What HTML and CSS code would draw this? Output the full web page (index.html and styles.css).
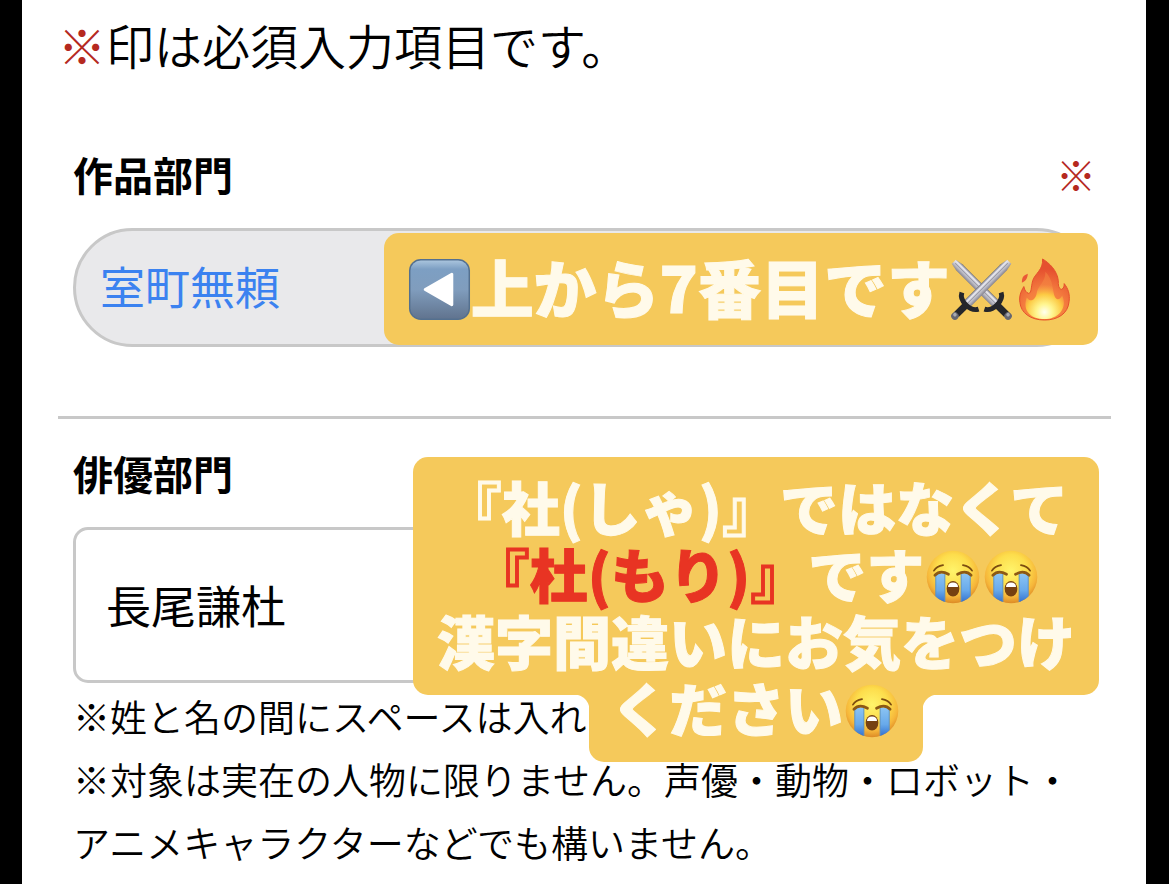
FILE: index.html
```html
<!DOCTYPE html>
<html lang="ja">
<head>
    <meta charset="UTF-8">
    <meta name="viewport" content="width=device-width, initial-scale=1.0">
    <title>投票フォーム</title>
    <link rel="stylesheet" href="styles.css">
</head>
<body>

<!-- 絵文字の定義 -->
<svg class="defs" width="0" height="0" aria-hidden="true">
    <defs>
        <linearGradient id="keyFill" x1="0" y1="0" x2="0" y2="1">
            <stop offset="0" stop-color="#a9c4dd"/>
            <stop offset="0.15" stop-color="#7d9fc3"/>
            <stop offset="0.5" stop-color="#809dbd"/>
            <stop offset="1" stop-color="#61748f"/>
        </linearGradient>
        <linearGradient id="blade" x1="0" y1="0" x2="1" y2="0">
            <stop offset="0" stop-color="#6f6f7a"/>
            <stop offset="0.25" stop-color="#e6e6ee"/>
            <stop offset="0.55" stop-color="#cdcdd6"/>
            <stop offset="1" stop-color="#85838f"/>
        </linearGradient>
        <radialGradient id="flame" gradientUnits="userSpaceOnUse" cx="32" cy="53" r="42">
            <stop offset="0" stop-color="#fb9a38"/>
            <stop offset="0.5" stop-color="#f47d3f"/>
            <stop offset="1" stop-color="#e5502f"/>
        </radialGradient>
        <radialGradient id="flameCore" gradientUnits="userSpaceOnUse" cx="32" cy="55" r="28">
            <stop offset="0" stop-color="#fffff0"/>
            <stop offset="0.3" stop-color="#fff58e"/>
            <stop offset="0.65" stop-color="#fcc943"/>
            <stop offset="1" stop-color="#f58b43" stop-opacity="0.5"/>
        </radialGradient>
        <radialGradient id="face" cx="0.5" cy="0.38" r="0.62">
            <stop offset="0" stop-color="#fff46b"/>
            <stop offset="0.5" stop-color="#fddd4c"/>
            <stop offset="0.8" stop-color="#f6b63a"/>
            <stop offset="1" stop-color="#dc8a25"/>
        </radialGradient>
        <linearGradient id="tear" x1="0" y1="0" x2="0" y2="1">
            <stop offset="0" stop-color="#8cc4f3"/>
            <stop offset="0.55" stop-color="#68aaeb"/>
            <stop offset="1" stop-color="#2b68ca"/>
        </linearGradient>
        <clipPath id="faceClip"><circle cx="32" cy="32" r="29"/></clipPath>

        <symbol id="sword" viewBox="0 0 64 64">
            <g transform="translate(5 59) rotate(45)">
                <path d="M-4.5 -16V-70L-3 -78H3L4.5 -70V-16Z" fill="url(#blade)"/>
                <path d="M0 -76V-16" stroke="#9999a5" stroke-width="1"/>
                <path d="M-3.5 -16H3.5V-2H-3.5Z" fill="#25262b"/>
                <path d="M-12 -22Q-9 -16 0 -16Q9 -16 12 -22" fill="none" stroke="#25262b" stroke-width="5"/>
                <circle r="3.8" fill="#666771"/>
                <circle cx="-1" cy="-1" r="1.8" fill="#a8a9b0"/>
            </g>
        </symbol>

        <symbol id="cry" viewBox="0 0 64 64">
            <circle cx="32" cy="32" r="29" fill="url(#face)"/>
            <g clip-path="url(#faceClip)">
                <rect x="13" y="28" width="10" height="34" fill="url(#tear)"/>
                <rect x="41" y="28" width="10" height="34" fill="url(#tear)"/>
                <path d="M13 28V62M23 28V62M41 28V62M51 28V62" stroke="#548fc9" stroke-width="1"/>
            </g>
            <path d="M12 30Q18 24 27 29M37 29Q46 24 52 30" fill="none" stroke="#8c5914" stroke-width="3" stroke-linecap="round"/>
            <path d="M11 25Q14 20 21 19M43 19Q50 20 53 25" fill="none" stroke="#7d4d10" stroke-width="2" stroke-linecap="round"/>
            <ellipse cx="32" cy="45" rx="7" ry="8.5" fill="#764111"/>
            <path d="M26.5 43Q26.5 38 32 38Q37.5 38 37.5 43Z" fill="#fff"/>
        </symbol>
    </defs>
</svg>

<main class="page">
    <p class="intro"><span class="required">※</span>印は必須入力項目です。</p>

    <form>
        <section class="field">
            <div class="field-head">
                <label for="work">作品部門</label>
                <span class="required">※</span>
            </div>
            <div class="control">
                <select id="work" class="work-select">
                    <option>室町無頼</option>
                </select>
                <div class="sticker sticker-top">
                    <svg class="emoji" viewBox="0 0 64 64" role="img" aria-label="左">
                        <rect x="1" y="1" width="62" height="62" rx="12" fill="#54708f"/>
                        <rect x="2.5" y="2.5" width="59" height="59" rx="10.5" fill="url(#keyFill)"/>
                        <path d="M17.5 32L44.5 16.5V47.5Z" fill="#fff" stroke="#fff" stroke-width="3" stroke-linejoin="round"/>
                    </svg>
                    <span class="sticker-text">上から7番目です</span>
                    <svg class="emoji" viewBox="0 0 64 64" role="img" aria-label="剣">
                        <g transform="translate(64 0) scale(-1 1)"><use href="#sword"/></g>
                        <use href="#sword"/>
                    </svg>
                    <svg class="emoji" viewBox="0 0 64 64" role="img" aria-label="炎">
                        <path d="M30 1C37 5 45 13 46 23C46 27 46 31 49 32C52 31 52 28 52 26C56 31 58 37 57 44C56 57 45 63 32 63C18 63 8 56 7 45C6 39 8 34 11 29C12 33 13 35 16 36C19 35 18 31 20 23C22 16 31 12 30 1Z" fill="url(#flame)" stroke="#e44f2c" stroke-width="1"/>
                        <path d="M15 16C15 21 12 24 9 25C9 20 10 18 15 16Z" fill="#ea5937"/>
                        <path d="M33 14C41 23 40 32 42 38C44 44 48 42 50 38C56 52 45 62 32 62C19 62 9 54 14 40C18 46 23 42 24 36C25 28 33 25 33 14Z" fill="url(#flameCore)"/>
                    </svg>
                </div>
            </div>
        </section>

        <hr class="divider">

        <section class="field">
            <div class="field-head">
                <label for="actor">俳優部門</label>
            </div>
            <div class="control">
                <input type="text" id="actor" class="actor-input" value="長尾謙杜">
                <div class="balloon">
                    <div class="balloon-main">
                        『社(しゃ)』ではなくて<br>
                        <strong>『杜(もり)』</strong>です<svg class="emoji" role="img" aria-label="泣"><use href="#cry"/></svg><svg class="emoji" role="img" aria-label="泣"><use href="#cry"/></svg><br>
                        漢字間違いにお気をつけ
                    </div>
                    <div class="balloon-tail">ください<svg class="emoji" role="img" aria-label="泣"><use href="#cry"/></svg></div>
                </div>
            </div>
            <p class="note">※姓と名の間にスペースは入れないでください。</p>
            <p class="note">※対象は実在の人物に限りません。声優・動物・ロボット・アニメキャラクターなどでも構いません。</p>
        </section>
    </form>
</main>

</body>
</html>
```
FILE: styles.css
```css
* {
    box-sizing: border-box;
}

body {
    margin: 0;
    padding: 0 23px 0 22px;
    background-color: #000;
    color: #000;
    font-family: "Noto Sans CJK JP", sans-serif;
}

.defs {
    position: absolute;
}

.page {
    min-height: 100vh;
    padding: 8px 35px 8px 36px;
    background-color: #fff;
}

.intro {
    margin: 0;
    font-size: 48px;
    font-weight: 350;
    line-height: 72px;
}

.required {
    color: #b5291f;
}

.field {
    padding: 0 15px;
}

.field-head {
    display: flex;
    justify-content: space-between;
    font-size: 40px;
    line-height: 60px;
}

.intro + form {
    margin-top: 64px;
}

.field-head label {
    font-weight: 700;
}

.field-head .required {
    font-weight: 350;
}

.control {
    position: relative;
    margin-top: 24px;
}

.work-select,
.actor-input {
    display: block;
    width: 100%;
    border: 3px solid #c8c8c8;
    font-family: inherit;
    font-size: 45px;
    outline: none;
}

.work-select {
    height: 119px;
    padding: 0 24px 4px;
    border-radius: 60px;
    background-color: #e9e9eb;
    color: #3b82f0;
    appearance: none;
}

.actor-input {
    height: 156px;
    padding: 0 30px 2px;
    border-radius: 15px;
    background-color: #fff;
    color: #000;
}

.divider {
    height: 3px;
    margin: 69px 0 24px;
    border: none;
    background-color: #c8c8c8;
}

/* 入力欄に重なる黄色のラベル */
.sticker,
.balloon {
    position: absolute;
    color: #fffaea;
    font-weight: 900;
    white-space: nowrap;
    -webkit-text-stroke: 1px currentColor;
}

.sticker {
    display: flex;
    align-items: center;
    border-radius: 15px;
    background-color: #f5c95b;
}

.sticker-top {
    top: 5px;
    right: -2px;
    height: 112px;
    padding: 0 22px 0 24px;
    font-size: 63px;
    line-height: 67px;
}

.sticker-text {
    padding-bottom: 8px;
}

.emoji {
    flex: none;
    width: 1em;
    height: 1em;
}

.balloon {
    top: -70px;
    right: -3px;
    z-index: 1;
    display: flex;
    flex-direction: column;
    align-items: center;
    font-size: 58px;
    line-height: 67px;
    text-align: center;
}

.balloon-main {
    padding: 16px 24px 21px;
    border-radius: 15px;
    background-color: #f5c95b;
}

.balloon-main strong {
    color: #e83423;
    font-weight: 900;
}

.balloon .emoji {
    vertical-align: -8px;
}

.balloon-tail {
    position: relative;
    margin-top: -21px;
    padding: 0 22px 21px;
    border-radius: 0 0 15px 15px;
    background-color: #f5c95b;
}

/* 吹き出しの内側の丸み */
.balloon-tail::before,
.balloon-tail::after {
    content: "";
    position: absolute;
    top: 21px;
    width: 15px;
    height: 15px;
}

.balloon-tail::before {
    right: 100%;
    background: radial-gradient(circle at 0 100%, transparent 15px, #f5c95b 16px);
}

.balloon-tail::after {
    left: 100%;
    background: radial-gradient(circle at 100% 100%, transparent 15px, #f5c95b 16px);
}

.note {
    margin: 0;
    font-size: 37px;
    font-weight: 350;
    line-height: 63px;
}

.control + .note {
    margin-top: 2px;
}
```
